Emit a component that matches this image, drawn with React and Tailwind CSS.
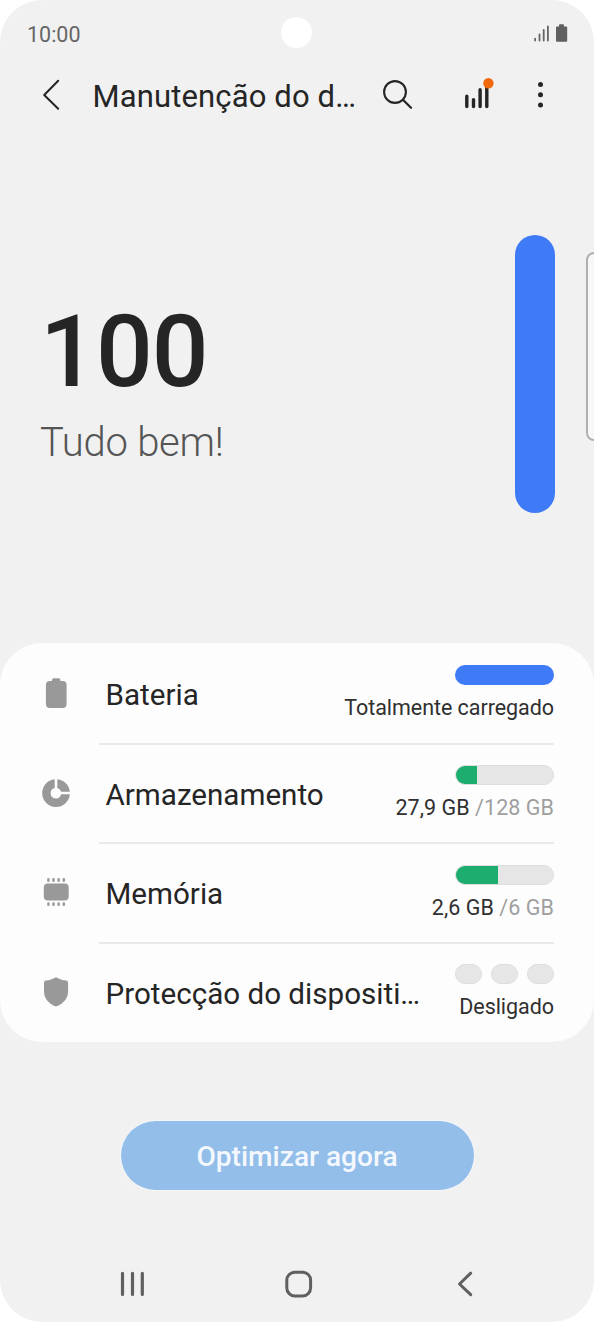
import React from "react";

function StatusBar() {
  return (
    <div className="relative flex h-[66px] shrink-0 items-center justify-between pl-[27px] pr-[26px]">
      <span className="pt-[3px] text-[21.5px] leading-[68px] text-[#666]">10:00</span>
      <div className="absolute left-[281px] top-[17px] h-[31px] w-[31px] rounded-full bg-white" />
      <svg className="h-[20px] w-[36px]" viewBox="532 23 36 20">
        <g stroke="#666" strokeWidth="1.8" strokeLinecap="round">
          <path d="M535.1 38.6V40.6M539.5 34.4V40.6M543.7 30V40.6M547.9 26.4V40.6" />
        </g>
        <path
          d="M559 26.4V25.3Q559 24.3 560 24.3H563Q564 24.3 564 25.3V26.4H566.2Q567.2 26.4 567.2 27.4V40.7Q567.2 41.7 566.2 41.7H557Q556 41.7 556 40.7V27.4Q556 26.4 557 26.4Z"
          fill="#606060"
        />
      </svg>
    </div>
  );
}

function Header() {
  return (
    <header className="flex h-[58px] shrink-0 items-center text-[#252525]">
      <svg className="ml-[40px] h-[34px] w-[22px]" viewBox="40 78 22 34" fill="none">
        <path d="M58.2 80.8L44.2 95L58.2 108.8" stroke="#252525" strokeWidth="2" strokeLinecap="round" strokeLinejoin="round" />
      </svg>
      <h1 className="ml-[30.5px] w-[279.5px] whitespace-nowrap pt-[3px] text-[31px] leading-[60px] tracking-[0.14px]">Manutenção do d…</h1>
      <svg className="ml-[8px] h-[34px] w-[34px]" viewBox="380 78 34 34" fill="none">
        <circle cx="395" cy="92" r="10.9" stroke="#252525" strokeWidth="2.1" />
        <path d="M403.2 100L411 107.8" stroke="#252525" strokeWidth="2.3" strokeLinecap="round" />
      </svg>
      <svg className="ml-[46px] h-[34px] w-[36px]" viewBox="460 78 36 34">
        <path d="M466.8 96.2V106.5M473.5 99.6V106.5M480.1 89.8V106.5M486.8 85V106.5" stroke="#252525" strokeWidth="3.4" strokeLinecap="round" />
        <circle cx="488.4" cy="83.2" r="5.2" fill="#f2690d" />
      </svg>
      <svg className="ml-[36px] h-[34px] w-[17px]" viewBox="532 78 17 34" fill="#252525">
        <circle cx="540.5" cy="84.5" r="2.5" />
        <circle cx="540.5" cy="94.8" r="2.5" />
        <circle cx="540.5" cy="105" r="2.5" />
      </svg>
    </header>
  );
}

function Hero() {
  return (
    <section className="relative flex h-[519px] shrink-0 justify-between pl-[40px] pr-[39.5px] pt-[111px]">
      <div className="pt-[57px]">
        <div className="text-[100px] font-medium leading-[120px] tracking-[-0.9px] text-[#252525]">100</div>
        <div className="mt-[6px] text-[40px] font-light leading-[50px] tracking-[-0.25px] text-[#555]">Tudo bem!</div>
      </div>
      <div className="h-[278px] w-[39.5px] rounded-full bg-[#3f7bf6]" />
      <div className="absolute -right-[10px] top-[128px] h-[189px] w-[18.5px] rounded-[8px] border-2 border-[#b0b0b0] bg-[#f8f8f8]" />
    </section>
  );
}

const icons = {
  battery: (
    <path d="M52 681V680Q52 678.3 53.7 678.3H58.7Q60.4 678.3 60.4 680V681H62.6Q66.6 681 66.6 685V704Q66.6 708 62.6 708H49.9Q45.9 708 45.9 704V685Q45.9 681 49.9 681Z" />
  ),
  storage: (
    <path d="M54.7 778.9A13.9 13.9 0 1 0 69.9 794H61.1A5.3 5.3 0 1 1 54.7 787.7ZM57.3 778.9V787.7A5.3 5.3 0 0 1 61.1 791.4H69.9A13.9 13.9 0 0 0 57.3 778.9Z" />
  ),
  memory: (
    <>
      <rect x="43.8" y="883.8" width="24.9" height="17.2" rx="4" />
      <path
        d="M48.4 879.6V881.2M53.5 879.6V881.2M58.6 879.6V881.2M63.8 879.6V881.2M48.4 903.8V905.2M53.5 903.8V905.2M58.6 903.8V905.2M63.8 903.8V905.2"
        stroke="#999"
        strokeWidth="2.5"
        strokeLinecap="round"
      />
    </>
  ),
  shield: (
    <path d="M56 977.3C59.5 979.4 62.5 980.1 66.4 980.7Q68.1 981.1 68.1 982.8V991C68.1 998.5 63.5 1003.5 56 1006.7C48.5 1003.5 44 998.5 44 991V982.8Q44 981.1 45.7 980.7C49.5 980.1 52.5 979.4 56 977.3Z" />
  ),
};

function Meter({ color, width }) {
  return (
    <div className="relative h-[20px] w-[99px] overflow-hidden rounded-full border border-[#dedede] bg-[#e6e6e6]">
      <div className={`-ml-px -mt-px h-[20px] ${color} ${width}`} />
    </div>
  );
}

function Row({ icon, viewBox, label, meter, wide, children, last }) {
  return (
    <div className="flex h-[99.7px] pl-[40px] pr-[40px]">
      <svg className="mt-[34px] h-[32px] w-[32px] shrink-0" viewBox={viewBox} fill="#999">
        {icons[icon]}
      </svg>
      <div className={`-mb-[2px] ml-[27px] flex min-w-0 flex-1 justify-between border-b-2 pl-[6.5px] ${last ? "border-transparent" : "border-[#e9e9e9]"}`}>
        <span className="whitespace-nowrap text-[29.6px] leading-[104px] text-[#252525]">{label}</span>
        <div className="flex shrink-0 flex-col items-end pt-[22.3px]">
          {meter}
          <span className={`mt-[9px] whitespace-nowrap text-[21.5px] leading-[28px] text-[#303030] ${wide ? "tracking-[0.06px]" : "tracking-[-0.05px]"}`}>{children}</span>
        </div>
      </div>
    </div>
  );
}

function Pill() {
  return <div className="h-[20px] w-[27px] rounded-full border border-[#dedede] bg-[#e6e6e6]" />;
}

export default function App() {
  return (
    <div className="h-[1322px] w-[594px] overflow-hidden bg-white font-['Roboto',sans-serif]">
      <main className="flex h-full flex-col overflow-hidden rounded-[42px] bg-[#f1f1f1]">
        <StatusBar />
        <Header />
        <Hero />
        <section className="h-[399px] shrink-0 overflow-hidden rounded-[42px] bg-[#fdfdfd]">
          <Row icon="battery" viewBox="40 677 32 32" label="Bateria" meter={<div className="h-[20px] w-[99px] rounded-full bg-[#3f7bf6]" />}>
            Totalmente carregado
          </Row>
          <Row icon="storage" viewBox="40 776.7 32 32" label="Armazenamento" wide meter={<Meter color="bg-[#1dad6f]" width="w-[22px]" />}>
            27,9 GB <span className="text-[#9f9f9f]">/128 GB</span>
          </Row>
          <Row icon="memory" viewBox="40 876.4 32 32" label="Memória" wide meter={<Meter color="bg-[#1dad6f]" width="w-[43px]" />}>
            2,6 GB <span className="text-[#9f9f9f]">/6 GB</span>
          </Row>
          <Row
            icon="shield"
            viewBox="40 976.1 32 32"
            label="Protecção do dispositi…"
            last
            meter={
              <div className="flex w-[99px] justify-between">
                <Pill />
                <Pill />
                <Pill />
              </div>
            }
          >
            Desligado
          </Row>
        </section>
        <div className="mt-[79px] flex shrink-0 justify-center">
          <button className="h-[69px] w-[353px] rounded-full bg-[#93beea] pt-[3px] text-[28.1px] font-medium text-[#f4f8fd] ring-1 ring-[#f4f7fa]">
            Optimizar agora
          </button>
        </div>
        <nav className="mt-[74px] flex h-[40px] shrink-0 items-center pl-[116px]">
          <svg className="h-[32px] w-[32px]" viewBox="116 1268 32 32">
            <path d="M122.5 1273.3V1294.4M132.5 1273.3V1294.4M142.3 1273.3V1294.4" stroke="#606060" strokeWidth="3.2" strokeLinecap="round" />
          </svg>
          <svg className="ml-[134px] h-[34px] w-[34px]" viewBox="282 1267 34 34" fill="none">
            <rect x="286.8" y="1272.2" width="23.8" height="23.8" rx="8" stroke="#606060" strokeWidth="3" />
          </svg>
          <svg className="ml-[140px] h-[32px] w-[24px]" viewBox="456 1268 24 32" fill="none">
            <path d="M470.7 1273.2L459.5 1284L470.7 1294.6" stroke="#606060" strokeWidth="3" strokeLinecap="round" strokeLinejoin="round" />
          </svg>
        </nav>
      </main>
    </div>
  );
}
